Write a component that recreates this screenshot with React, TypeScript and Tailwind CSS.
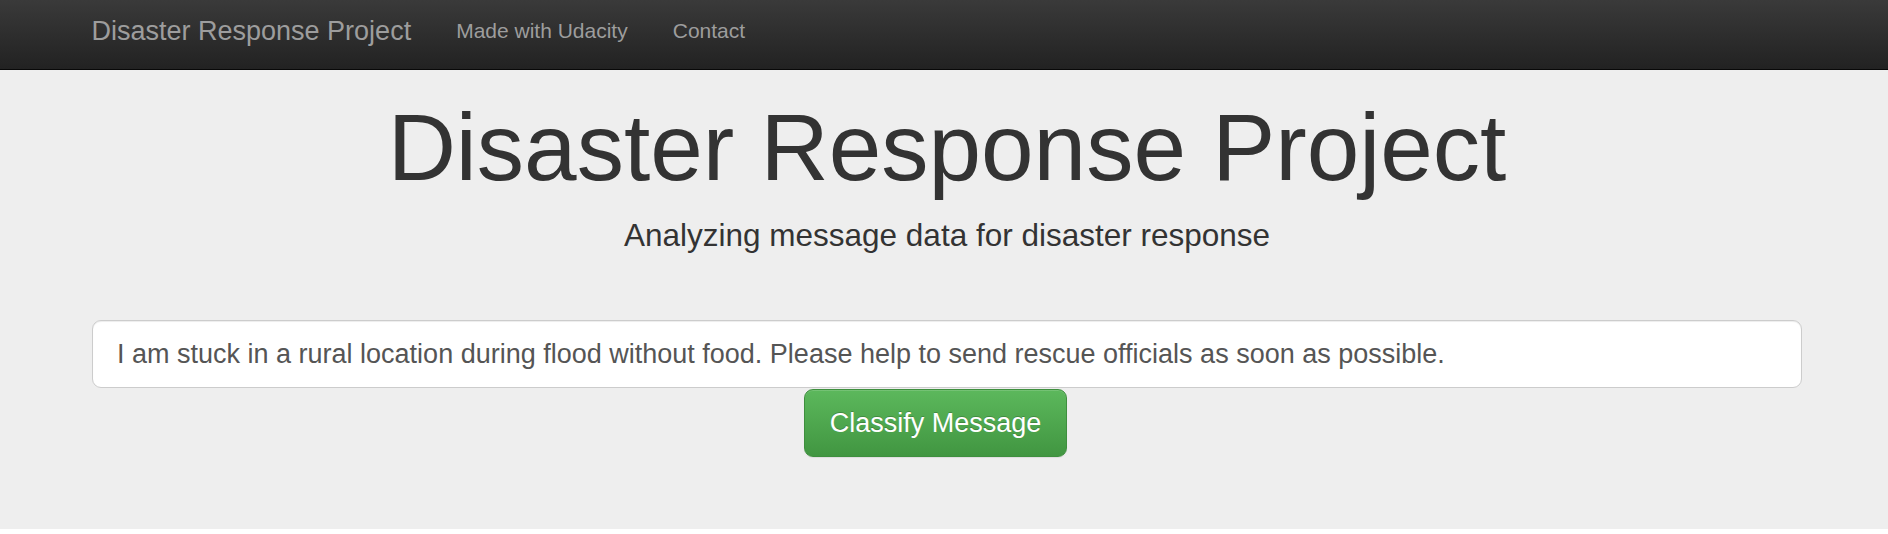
const font = { fontFamily: '"Liberation Sans", Arial, Helvetica, sans-serif' }

export default function App() {
  return (
    <div className="min-h-[534px] bg-white" style={font}>
      {/* Navbar */}
      <nav className="h-[70px] border-b border-[#080808] bg-gradient-to-b from-[#3a3a3a] to-[#222222]">
        <div className="flex items-start pl-[69px] pt-[16px]">
          <a className="px-[22.5px] text-[27px] leading-[30px] text-[#9d9d9d]">Disaster Response Project</a>
          <ul className="flex">
            <li>
              <a className="block px-[22.5px] text-[21px] leading-[30px] text-[#9d9d9d]">Made with Udacity</a>
            </li>
            <li>
              <a className="block px-[22.5px] text-[21px] leading-[30px] text-[#9d9d9d]">Contact</a>
            </li>
          </ul>
        </div>
      </nav>

      {/* Jumbotron */}
      <div className="bg-[#eeeeee] pb-[72px]">
        <div className="ml-[92px] w-[1710px]">
          <h1 className="pt-[25px] text-center text-[94.5px] leading-[104px] text-[#333333]">
            Disaster Response Project
          </h1>
          <p className="mt-[14px] text-center text-[31.5px] leading-[45px] text-[#333333]">
            Analyzing message data for disaster response
          </p>

          <form className="mt-[62px]" onSubmit={(e) => e.preventDefault()}>
            <input
              type="text"
              readOnly
              defaultValue="I am stuck in a rural location during flood without food. Please help to send rescue officials as soon as possible."
              className="block h-[68px] w-full rounded-[9px] border border-[#cccccc] bg-white px-[24px] text-[27px] text-[#555555] shadow-[inset_0_1px_1px_rgba(0,0,0,0.075)] outline-none"
              style={font}
            />
            <div className="mt-[1px] flex">
              <button
                type="submit"
                className="ml-[712px] h-[68px] w-[263px] rounded-[9px] border border-[#3e8f3e] bg-gradient-to-b from-[#5cb85c] to-[#419641] text-[27px] text-white shadow-[inset_0_1px_0_rgba(255,255,255,0.15),0_1px_1px_rgba(0,0,0,0.075)] [text-shadow:0_-1px_0_rgba(0,0,0,0.2)]"
                style={font}
              >
                Classify Message
              </button>
            </div>
          </form>
        </div>
      </div>
    </div>
  )
}
